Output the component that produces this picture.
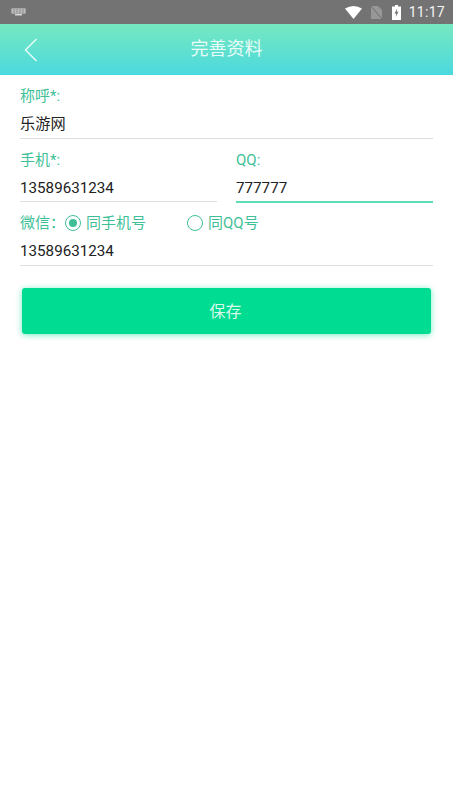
<div class="page">
  <div class="status">
    <svg class="kbd" width="15" height="8" viewBox="0 0 15 8">
      <rect x="0.5" y="0.5" width="14" height="5" fill="#d8d8d8" />
      <path d="M1 2h13M1 4h13M3 1v4M6 1v4M9 1v4M12 1v4" stroke="#777" stroke-width="0.6" />
      <rect x="4" y="6" width="7" height="1.5" fill="#d8d8d8" />
    </svg>
    <div class="sys">
      <svg width="17" height="13" viewBox="0 0 17 13"><path d="M0 2.6 Q8.5 -2.6 17 2.6 L8.5 13Z" fill="#fff" /></svg>
      <svg width="11" height="13" viewBox="0 0 11 13"><path d="M0 0H7L11 4V13H0Z" fill="#979797" /><path d="M0 0L11 13" stroke="#6f6f6f" stroke-width="1" /></svg>
      <svg width="9" height="15" viewBox="0 0 9 15"><path d="M3 0H6V1.5H9V15H0V1.5H3Z" fill="#fff" /><path d="M5.2 3.5 2.6 8.4H4.2L3.6 12 6.5 6.8H4.8Z" fill="#707070" /></svg>
      <span class="time">11:17</span>
    </div>
  </div>

  <header class="bar">
    <svg class="back" width="14" height="24" viewBox="0 0 14 24"><path d="M12.5 1 1.5 12 12.5 23" fill="none" stroke="#e6fbf6" stroke-width="1.5" /></svg>
    <h1>完善资料</h1>
  </header>

  <form class="form">
    <div class="field">
      <span class="label">称呼*:</span>
      <div class="value">乐游网</div>
    </div>
    <div class="split">
      <div class="field">
        <span class="label">手机*:</span>
        <div class="value">13589631234</div>
      </div>
      <div class="field">
        <span class="label">QQ:</span>
        <div class="value active">777777</div>
      </div>
    </div>
    <div class="field wechat">
      <div class="radios">
        <span class="label">微信：</span>
        <span class="radio on"></span>
        <span class="label">同手机号</span>
        <span class="radio second"></span>
        <span class="label">同QQ号</span>
      </div>
      <div class="value">13589631234</div>
    </div>
    <button type="button" class="save">保存</button>
  </form>
</div>

<style>
  :global(body) {
    margin: 0;
    background: #fff;
  }
  .page {
    width: 453px;
    height: 806px;
    overflow: hidden;
    background: #fff;
    font-family: "Roboto", "Noto Sans CJK SC", sans-serif;
  }
  .status {
    height: 24px;
    background: #737373;
    display: flex;
    align-items: center;
    justify-content: space-between;
    padding: 0 8px 0 11px;
  }
  .kbd {
    margin-top: -1px;
  }
  .sys {
    display: flex;
    align-items: center;
  }
  .sys svg:nth-child(1) { margin-right: 9px; }
  .sys svg:nth-child(2) { margin-right: 10px; }
  .sys svg:nth-child(3) { margin-right: 8px; }
  .time {
    color: #f4f4f4;
    font-size: 14px;
    letter-spacing: 0.3px;
  }
  .bar {
    height: 51px;
    background: linear-gradient(#76e8c0, #4bd9de);
    display: flex;
    align-items: center;
    justify-content: center;
    position: relative;
  }
  .back {
    position: absolute;
    left: 24px;
    top: 14px;
  }
  h1 {
    margin: 0 0 6px;
    color: #e9fbf6;
    font-size: 18px;
    font-weight: 400;
  }
  .form {
    display: flex;
    flex-direction: column;
    padding: 11px 20px 0;
  }
  .field {
    display: flex;
    flex-direction: column;
    flex: 1;
  }
  .label {
    color: #3fbf98;
    font-size: 15px;
    line-height: 20px;
    height: 20px;
  }
  .value {
    color: #222;
    font-size: 15.2px;
    line-height: 22px;
    height: 22px;
    margin-top: 7px;
    padding-bottom: 3px;
    border-bottom: 1.5px solid #dbe0df;
  }
  .split .value {
    padding-bottom: 2px;
  }
  .value.active {
    border-bottom: 2px solid #5fdcb8;
  }
  .split {
    display: flex;
    gap: 19px;
    margin-top: 10.5px;
  }
  .wechat {
    margin-top: 10px;
  }
  .radios {
    display: flex;
    align-items: center;
    height: 20px;
  }
  .radios + .value {
    margin-top: 7px;
  }
  .radio {
    width: 14px;
    height: 14px;
    border: 1.5px solid #3fbf98;
    border-radius: 50%;
    margin-right: 5px;
    flex: none;
    position: relative;
  }
  .radio.on::after {
    content: "";
    position: absolute;
    inset: 3px;
    border-radius: 50%;
    background: #3fbf98;
  }
  .radio.second {
    margin-left: 41px;
  }
  .save {
    align-self: flex-start;
    width: 409px;
    height: 46px;
    margin: 22px 0 0 2px;
    border: 0;
    border-radius: 3px;
    background: #00dc92;
    color: #d8f8ec;
    font: inherit;
    font-size: 16px;
    padding: 0 2px 2px 0;
    box-shadow: 0 1px 6px rgba(0, 220, 146, 0.55);
  }
</style>
